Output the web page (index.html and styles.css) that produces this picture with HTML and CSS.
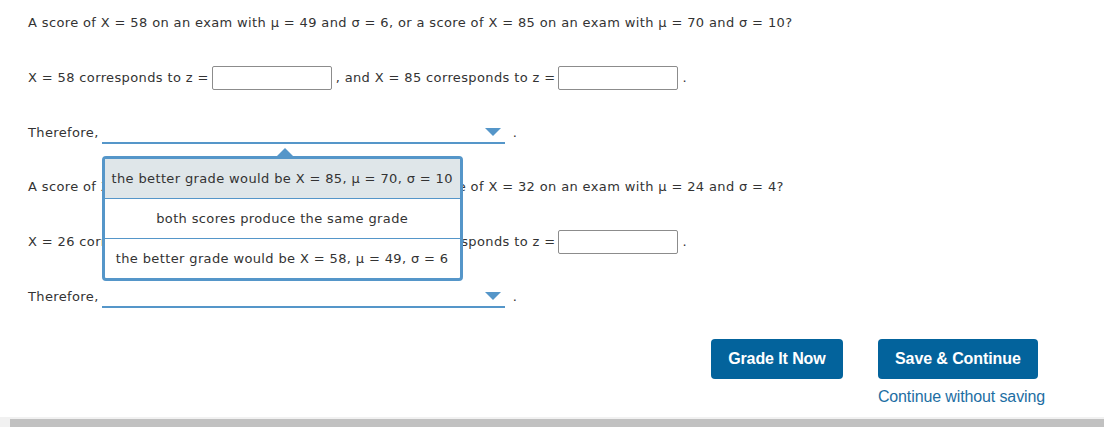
FILE: index.html
```html
<!DOCTYPE html>
<html lang="en">
<head>
<meta charset="utf-8">
<title>z-scores</title>
<link rel="stylesheet" href="styles.css">
</head>
<body>
<div class="page">
  <main class="content">
    <section class="question">
      <p class="line">A score of X = 58 on an exam with μ = 49 and σ = 6, or a score of X = 85 on an exam with μ = 70 and σ = 10?</p>
      <p class="line">X = 58 corresponds to z = <span class="box"></span>, and X = 85 corresponds to z = <span class="box"></span>.</p>
      <p class="line">Therefore, <span class="select open"><span class="caret"></span>
        <span class="menu">
          <span class="opt hl">the better grade would be X = 85, μ = 70, σ = 10</span>
          <span class="opt">both scores produce the same grade</span>
          <span class="opt">the better grade would be X = 58, μ = 49, σ = 6</span>
        </span>
      </span> .</p>
    </section>
    <section class="question">
      <p class="line">A score of X = 26 on an exam with μ = 20 and σ = 2, or a score of X = 32 on an exam with μ = 24 and σ = 4?</p>
      <p class="line">X = 26 corresponds to z = <span class="box"></span>, and X = 32 corresponds to z = <span class="box"></span>.</p>
      <p class="line">Therefore, <span class="select"><span class="caret"></span></span> .</p>
    </section>
  </main>
  <div class="actions">
    <button class="btn grade">Grade It Now</button>
    <div class="save-col">
      <button class="btn">Save &amp; Continue</button>
      <a class="link" href="#">Continue without saving</a>
    </div>
  </div>
  <div class="hscroll"><div class="thumb"></div></div>
</div>
</body>
</html>
```

FILE: styles.css
```css
html, body {
  margin: 0;
  padding: 0;
  background: #fff;
}
.page {
  height: 427px;
  display: flex;
  flex-direction: column;
  overflow: hidden;
}
.content {
  padding: 13px 0 0 28px;
  font-family: "DejaVu Sans", Verdana, sans-serif;
  font-size: 13px;
  letter-spacing: 0.37px;
  color: #333;
}
.question {
  display: flex;
  flex-direction: column;
}
.question + .question {
  margin-top: 34px;
}
.line {
  margin: 0;
  height: 20px;
  line-height: 20px;
  white-space: nowrap;
  display: flex;
  align-items: center;
}
.line + .line {
  margin-top: 35px;
}
.box {
  display: inline-block;
  width: 118px;
  height: 22px;
  border: 1px solid #8c8c8c;
  border-radius: 2px;
  margin: 0 4px 0 3px;
  background: #fff;
}
.select {
  position: relative;
  display: inline-block;
  width: 403px;
  height: 20px;
  margin: 0 8px 0 3px;
  border-bottom: 2px solid #5596c9;
}
.caret {
  position: absolute;
  right: 4px;
  top: 6px;
  width: 0;
  height: 0;
  border-left: 8px solid transparent;
  border-right: 8px solid transparent;
  border-top: 8px solid #5596c9;
}
.menu {
  position: absolute;
  left: 0;
  top: 34px;
  width: 355px;
  border: 3px solid #5596c9;
  border-radius: 4px;
  background: #fff;
  display: flex;
  flex-direction: column;
  z-index: 5;
}
.menu::before {
  content: "";
  position: absolute;
  left: 172px;
  top: -11px;
  border-left: 8px solid transparent;
  border-right: 8px solid transparent;
  border-bottom: 8px solid #5596c9;
}
.opt {
  display: flex;
  align-items: center;
  justify-content: center;
  height: 39px;
  white-space: nowrap;
  color: #333;
}
.opt + .opt {
  border-top: 1px solid #5596c9;
}
.opt.hl {
  background: #dfe6e9;
  height: 39px;
}
.actions {
  display: flex;
  justify-content: flex-end;
  align-items: flex-start;
  gap: 35px;
  padding: 0 59px 0 0;
  margin-top: 32px;
  font-family: "Liberation Sans", Arial, sans-serif;
}
.btn {
  height: 40px;
  border: none;
  border-radius: 4px;
  background: #03639c;
  color: #fff;
  font-family: "Liberation Sans", Arial, sans-serif;
  font-weight: bold;
  font-size: 16px;
  letter-spacing: -0.1px;
  padding: 0;
  width: 132px;
}
.save-col {
  display: flex;
  flex-direction: column;
  align-items: flex-start;
  gap: 8px;
}
.save-col .btn {
  width: 160px;
}
.link {
  color: #1d6ea3;
  text-decoration: none;
  font-size: 16px;
  letter-spacing: -0.12px;
  line-height: 20px;
}
.hscroll {
  margin-top: auto;
  height: 10px;
  background: #f1f1f1;
  padding-left: 10px;
  padding-top: 2px;
  box-sizing: border-box;
}
.thumb {
  height: 8px;
  background: #c1c1c1;
}
```
